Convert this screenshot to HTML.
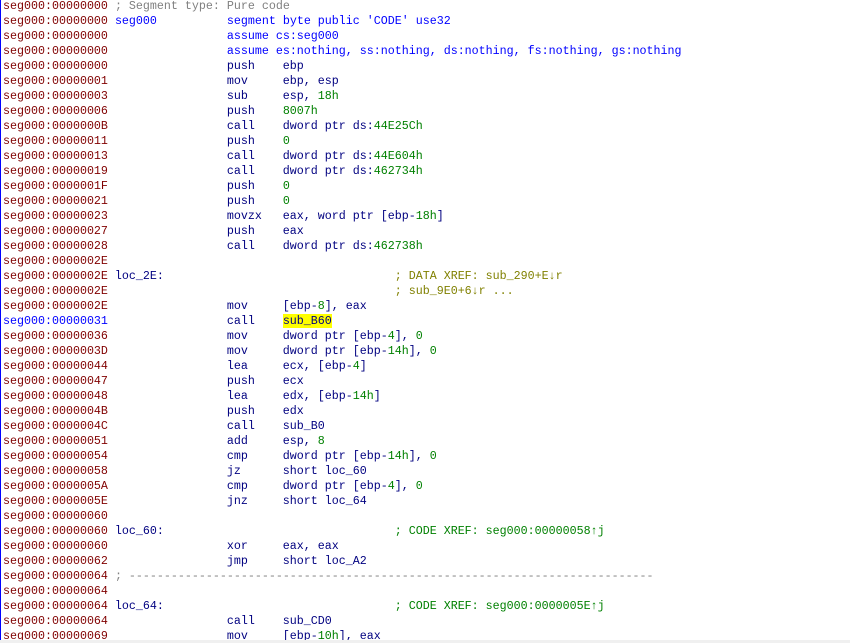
<!DOCTYPE html>
<html><head><meta charset="utf-8"><style>
html,body{margin:0;padding:0;background:#fff;width:850px;height:643px;overflow:hidden}
pre{margin:0;position:absolute;left:3px;top:-1px;font-family:"Liberation Mono",monospace;font-size:11.67px;line-height:15px;color:#000080}
.a{color:#800000}.ab{color:#0000ff}.c{color:#808080}.d{color:#0000ff}.n{color:#008000}.x{color:#808000}.g{color:#008000}.l{color:#0000ff}
.h{background:#ffff00}
#lb{position:absolute;left:0;top:0;width:1px;height:643px;background:#0000ff}
#bt{position:absolute;left:0;top:640px;width:850px;height:3px;background:#f0f0f0}
</style></head><body><div id="lb"></div><pre><span class="a">seg000:00000000</span> <span class="c">; Segment type: Pure code</span>
<span class="a">seg000:00000000</span> <span class="l">seg000</span>          <span class="d">segment byte public 'CODE' use32</span>
<span class="a">seg000:00000000</span>                 <span class="d">assume cs:seg000</span>
<span class="a">seg000:00000000</span>                 <span class="d">assume es:nothing, ss:nothing, ds:nothing, fs:nothing, gs:nothing</span>
<span class="a">seg000:00000000</span>                 push    ebp
<span class="a">seg000:00000001</span>                 mov     ebp, esp
<span class="a">seg000:00000003</span>                 sub     esp, <span class="n">18h</span>
<span class="a">seg000:00000006</span>                 push    <span class="n">8007h</span>
<span class="a">seg000:0000000B</span>                 call    dword ptr ds:<span class="n">44E25Ch</span>
<span class="a">seg000:00000011</span>                 push    <span class="n">0</span>
<span class="a">seg000:00000013</span>                 call    dword ptr ds:<span class="n">44E604h</span>
<span class="a">seg000:00000019</span>                 call    dword ptr ds:<span class="n">462734h</span>
<span class="a">seg000:0000001F</span>                 push    <span class="n">0</span>
<span class="a">seg000:00000021</span>                 push    <span class="n">0</span>
<span class="a">seg000:00000023</span>                 movzx   eax, word ptr [ebp-<span class="n">18h</span>]
<span class="a">seg000:00000027</span>                 push    eax
<span class="a">seg000:00000028</span>                 call    dword ptr ds:<span class="n">462738h</span>
<span class="a">seg000:0000002E</span>
<span class="a">seg000:0000002E</span> loc_2E:                                 <span class="x">; DATA XREF: sub_290+E↓r</span>
<span class="a">seg000:0000002E</span>                                         <span class="x">; sub_9E0+6↓r ...</span>
<span class="a">seg000:0000002E</span>                 mov     [ebp-<span class="n">8</span>], eax
<span class="ab">seg000:00000031</span>                 call    <span class="h">sub_B60</span>
<span class="a">seg000:00000036</span>                 mov     dword ptr [ebp-<span class="n">4</span>], <span class="n">0</span>
<span class="a">seg000:0000003D</span>                 mov     dword ptr [ebp-<span class="n">14h</span>], <span class="n">0</span>
<span class="a">seg000:00000044</span>                 lea     ecx, [ebp-<span class="n">4</span>]
<span class="a">seg000:00000047</span>                 push    ecx
<span class="a">seg000:00000048</span>                 lea     edx, [ebp-<span class="n">14h</span>]
<span class="a">seg000:0000004B</span>                 push    edx
<span class="a">seg000:0000004C</span>                 call    sub_B0
<span class="a">seg000:00000051</span>                 add     esp, <span class="n">8</span>
<span class="a">seg000:00000054</span>                 cmp     dword ptr [ebp-<span class="n">14h</span>], <span class="n">0</span>
<span class="a">seg000:00000058</span>                 jz      short loc_60
<span class="a">seg000:0000005A</span>                 cmp     dword ptr [ebp-<span class="n">4</span>], <span class="n">0</span>
<span class="a">seg000:0000005E</span>                 jnz     short loc_64
<span class="a">seg000:00000060</span>
<span class="a">seg000:00000060</span> loc_60:                                 <span class="g">; CODE XREF: seg000:00000058↑j</span>
<span class="a">seg000:00000060</span>                 xor     eax, eax
<span class="a">seg000:00000062</span>                 jmp     short loc_A2
<span class="a">seg000:00000064</span> <span class="c">; ---------------------------------------------------------------------------</span>
<span class="a">seg000:00000064</span>
<span class="a">seg000:00000064</span> loc_64:                                 <span class="g">; CODE XREF: seg000:0000005E↑j</span>
<span class="a">seg000:00000064</span>                 call    sub_CD0
<span class="a">seg000:00000069</span>                 mov     [ebp-<span class="n">10h</span>], eax
</pre><div id="bt"></div></body></html>
